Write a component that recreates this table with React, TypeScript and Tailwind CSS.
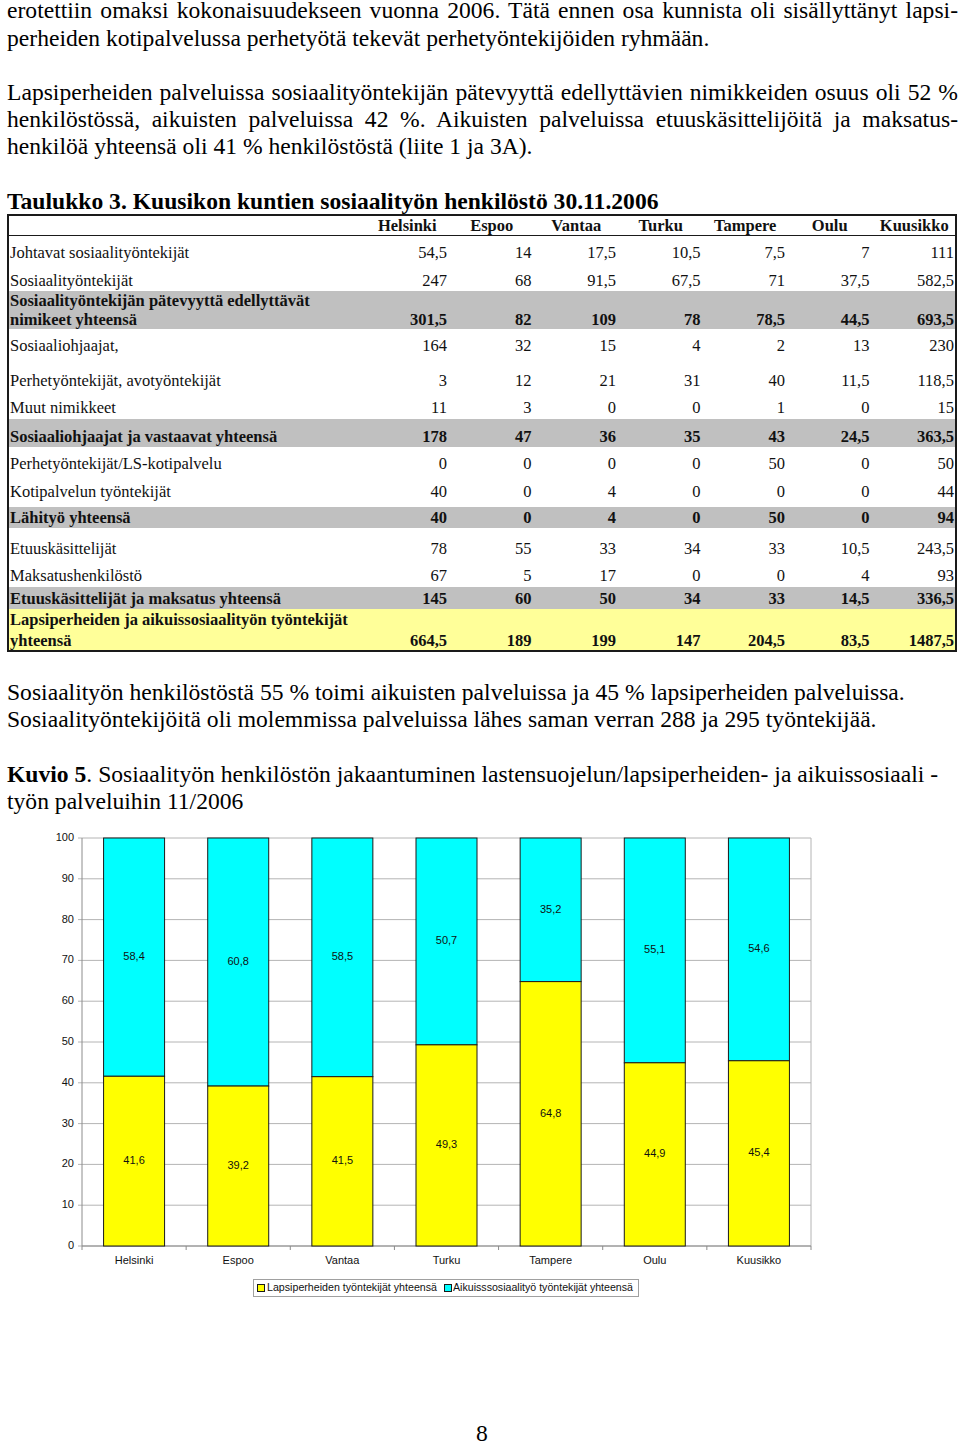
const serif = { fontFamily: '"Liberation Serif", "Times New Roman", serif' };

type Row = {
  label: React.ReactNode;
  values: string[];
  cls: string; // height, background, weight, line height
  pb: string;
};

const rows: Row[] = [
  { label: "Johtavat sosiaalityöntekijät", values: ["54,5", "14", "17,5", "10,5", "7,5", "7", "111"], cls: "h-[28px] leading-[20px]", pb: "pb-[1px]" },
  { label: "Sosiaalityöntekijät", values: ["247", "68", "91,5", "67,5", "71", "37,5", "582,5"], cls: "h-[27px] leading-[20px]", pb: "pb-0" },
  {
    label: (
      <>
        Sosiaalityöntekijän pätevyyttä edellyttävät
        <br />
        nimikeet yhteensä
      </>
    ),
    values: ["301,5", "82", "109", "78", "78,5", "44,5", "693,5"],
    cls: "h-[38px] leading-[19px] bg-[#c0c0c0] font-bold",
    pb: "pb-[1px]",
  },
  { label: "Sosiaaliohjaajat,", values: ["164", "32", "15", "4", "2", "13", "230"], cls: "h-[28px] leading-[20px]", pb: "pb-[1px]" },
  { label: "Perhetyöntekijät, avotyöntekijät", values: ["3", "12", "21", "31", "40", "11,5", "118,5"], cls: "h-[35px] leading-[20px]", pb: "pb-[1px]" },
  { label: "Muut nimikkeet", values: ["11", "3", "0", "0", "1", "0", "15"], cls: "h-[27px] leading-[20px]", pb: "pb-[1px]" },
  { label: "Sosiaaliohjaajat ja vastaavat yhteensä", values: ["178", "47", "36", "35", "43", "24,5", "363,5"], cls: "h-[28px] leading-[20px] bg-[#c0c0c0] font-bold", pb: "pb-0" },
  { label: "Perhetyöntekijät/LS-kotipalvelu", values: ["0", "0", "0", "0", "50", "0", "50"], cls: "h-[28px] leading-[20px]", pb: "pb-[1px]" },
  { label: "Kotipalvelun työntekijät", values: ["40", "0", "4", "0", "0", "0", "44"], cls: "h-[32px] leading-[20px]", pb: "pb-[5px]" },
  { label: "Lähityö yhteensä", values: ["40", "0", "4", "0", "50", "0", "94"], cls: "h-[21px] leading-[20px] bg-[#c0c0c0] font-bold", pb: "pb-0" },
  { label: "Etuuskäsittelijät", values: ["78", "55", "33", "34", "33", "10,5", "243,5"], cls: "h-[31px] leading-[20px]", pb: "pb-0" },
  { label: "Maksatushenkilöstö", values: ["67", "5", "17", "0", "0", "4", "93"], cls: "h-[28px] leading-[20px]", pb: "pb-[1px]" },
  { label: "Etuuskäsittelijät ja maksatus yhteensä", values: ["145", "60", "50", "34", "33", "14,5", "336,5"], cls: "h-[22px] leading-[20px] bg-[#c0c0c0] font-bold", pb: "pb-0" },
  {
    label: (
      <>
        Lapsiperheiden ja aikuissosiaalityön työntekijät
        <br />
        yhteensä
      </>
    ),
    values: ["664,5", "189", "199", "147", "204,5", "83,5", "1487,5"],
    cls: "h-[41px] leading-[21px] bg-[#ffff99] font-bold",
    pb: "pb-0",
  },
];

const cities = ["Helsinki", "Espoo", "Vantaa", "Turku", "Tampere", "Oulu", "Kuusikko"];
const shares = [
  [41.6, 58.4],
  [39.2, 60.8],
  [41.5, 58.5],
  [49.3, 50.7],
  [64.8, 35.2],
  [44.9, 55.1],
  [45.4, 54.6],
];

function StaffTable() {
  return (
    <div className="mt-[-1px] w-[950px] border-2 border-[#1a1a1a] text-[16.5px] text-[#111]">
      <div className="grid h-[20px] grid-cols-[1fr_repeat(7,84.5px)] items-center border-b border-[#1a1a1a] font-bold leading-[19px]">
        <div />
        {cities.map((c) => (
          <div key={c} className="pl-[3px] text-center">
            {c}
          </div>
        ))}
      </div>
      {rows.map((r, i) => (
        <div key={i} className={`grid grid-cols-[1fr_repeat(7,84.5px)] items-end ${r.cls} ${r.pb}`}>
          <div className="pl-[1px] whitespace-nowrap">{r.label}</div>
          {r.values.map((v, j) => (
            <div key={j} className="pr-[1px] text-right">
              {v}
            </div>
          ))}
        </div>
      ))}
    </div>
  );
}

function Chart() {
  const y0 = 1245;
  const k = 4.08;
  const left = 82;
  const right = 811;
  const step = (right - left) / 7;
  const sans = '"Liberation Sans", Arial, sans-serif';

  return (
    <svg width="960" height="490" viewBox="0 816 960 490" className="mt-[2px] block">
      {Array.from({ length: 11 }).map((_, i) => {
        const y = y0 - i * 10 * k;
        return (
          <g key={i}>
            <line x1={78} x2={right} y1={y} y2={y} stroke="#b4b4b4" strokeWidth="1" />
            <text x={74} y={y} textAnchor="end" dominantBaseline="middle" fontFamily={sans} fontSize="11" fill="#111">
              {i * 10}
            </text>
          </g>
        );
      })}
      <line x1={left} x2={left} y1={y0 - 100 * k} y2={y0} stroke="#8c8c8c" />
      <line x1={right} x2={right} y1={y0 - 100 * k} y2={y0} stroke="#b4b4b4" />
      <line x1={left} x2={right} y1={y0} y2={y0} stroke="#8c8c8c" />
      {Array.from({ length: 8 }).map((_, i) => (
        <line key={i} x1={left + i * step} x2={left + i * step} y1={y0} y2={y0 + 4} stroke="#8c8c8c" />
      ))}
      {shares.map(([a, b], i) => {
        const cx = left + step * (i + 0.5);
        const x = cx - 30.5;
        const yTop = y0 - a * k;
        return (
          <g key={cities[i]}>
            <rect x={x} y={y0 - 100 * k} width={61} height={b * k} fill="#00ffff" stroke="#1a1a1a" />
            <rect x={x} y={yTop} width={61} height={a * k} fill="#ffff00" stroke="#1a1a1a" />
            <text x={cx} y={y0 - (a + b / 2) * k} textAnchor="middle" dominantBaseline="middle" fontFamily={sans} fontSize="11" fill="#111">
              {b.toFixed(1).replace(".", ",")}
            </text>
            <text x={cx} y={y0 - (a / 2) * k} textAnchor="middle" dominantBaseline="middle" fontFamily={sans} fontSize="11" fill="#111">
              {a.toFixed(1).replace(".", ",")}
            </text>
            <text x={cx} y={1260} textAnchor="middle" dominantBaseline="middle" fontFamily={sans} fontSize="11" fill="#111">
              {cities[i]}
            </text>
          </g>
        );
      })}
      {/* legend */}
      <rect x={253.5} y={1278.5} width={385} height={17} fill="#fff" stroke="#a0a0a0" />
      <rect x={257.5} y={1283.5} width={7} height={7} fill="#ffff00" stroke="#1a1a1a" />
      <text x={267} y={1287.5} dominantBaseline="middle" fontFamily={sans} fontSize="10.6" fill="#111" textLength={170} lengthAdjust="spacingAndGlyphs">
        Lapsiperheiden työntekijät yhteensä
      </text>
      <rect x={444.5} y={1283.5} width={7} height={7} fill="#00ffff" stroke="#1a1a1a" />
      <text x={453} y={1287.5} dominantBaseline="middle" fontFamily={sans} fontSize="10.6" fill="#111" textLength={180} lengthAdjust="spacingAndGlyphs">
        Aikuisssosiaalityö työntekijät yhteensä
      </text>
    </svg>
  );
}

export default function App() {
  return (
    <div className="h-[1445px] w-[960px] overflow-hidden bg-white text-black" style={serif}>
      <div className="mt-[-2.6px] w-[958px] pl-[7px] text-[23.6px] leading-[27.2px]">
        {/* Intro paragraphs */}
        <div className="text-justify [text-align-last:justify]">
          erotettiin omaksi kokonaisuudekseen vuonna 2006. Tätä ennen osa kunnista oli sisällyttänyt lapsi-
        </div>
        <div>perheiden kotipalvelussa perhetyötä tekevät perhetyöntekijöiden ryhmään.</div>
        <div className="h-[27.2px]" />
        <div className="text-justify [text-align-last:justify]">
          Lapsiperheiden palveluissa sosiaalityöntekijän pätevyyttä edellyttävien nimikkeiden osuus oli 52 %
        </div>
        <div className="text-justify [text-align-last:justify]">
          henkilöstössä, aikuisten palveluissa 42 %. Aikuisten palveluissa etuuskäsittelijöitä ja maksatus-
        </div>
        <div>henkilöä yhteensä oli 41 % henkilöstöstä (liite 1 ja 3A).</div>
        <div className="h-[27.2px]" />
        <div className="font-bold whitespace-nowrap">Taulukko 3. Kuusikon kuntien sosiaalityön henkilöstö 30.11.2006</div>

        <StaffTable />

        <div className="h-[27.2px]" />
        <div className="whitespace-nowrap">
          Sosiaalityön henkilöstöstä 55 % toimi aikuisten palveluissa ja 45 % lapsiperheiden palveluissa.
        </div>
        <div className="whitespace-nowrap">
          Sosiaalityöntekijöitä oli molemmissa palveluissa lähes saman verran 288 ja 295 työntekijää.
        </div>
        <div className="h-[27.2px]" />
        <div className="whitespace-nowrap">
          <span className="font-bold">Kuvio 5</span>. Sosiaalityön henkilöstön jakaantuminen lastensuojelun/lapsiperheiden- ja aikuissosiaali -
        </div>
        <div className="whitespace-nowrap">työn palveluihin 11/2006</div>
      </div>

      <Chart />

      <div className="mt-[113px] pl-[4px] text-center text-[23.6px] leading-[27.2px]">8</div>
    </div>
  );
}
